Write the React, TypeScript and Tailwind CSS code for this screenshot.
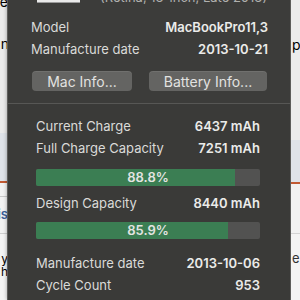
const font = { fontFamily: 'Inter, "Noto Sans", sans-serif' };

type Row = { label: string; value: string };

const upperRows: Row[] = [
  { label: 'Model', value: 'MacBookPro11,3' },
  { label: 'Manufacture date', value: '2013-10-21' },
];

const InfoRow = ({ label, value }: Row) => (
  <div className="flex h-[22px] items-center justify-between text-[13px]">
    <span className="text-[#dadad8]">{label}</span>
    <span className="font-semibold text-[#ebebe9]">{value}</span>
  </div>
);

const Bar = ({ percent }: { percent: number }) => (
  <div className="relative h-[17px] w-full overflow-hidden rounded-[2px] bg-[#525251]">
    <div className="h-full bg-[#3b7e53]" style={{ width: `${percent}%` }} />
    <div className="absolute inset-0 flex items-center justify-center text-[13px] font-semibold text-[#e4e4e2]">
      {percent.toFixed(1)}%
    </div>
  </div>
);

const LeftStrip = () => (
  <div className="flex w-[7px] shrink-0 flex-col overflow-hidden bg-[#ebebeb] text-[14px] text-black">
    <div className="flex h-[9px] items-end justify-end whitespace-nowrap leading-none">
      <span className="-mr-[1px]">e</span>
    </div>
    <div className="mt-[28px] flex h-[12px] justify-end whitespace-nowrap leading-none">
      <span className="-mr-[2px]">n</span>
    </div>
    <div className="h-[84px]" />
    <div className="h-[48px] bg-[#dfe3e9]" />
    <div className="h-[2px] bg-[#c25a33]" />
    <div className="h-[13px] bg-[#f2f2f2]" />
    <div className="h-px bg-[#c9c9c9]" />
    <div className="flex h-[36px] items-center justify-end bg-[#f2f2f2] text-[13px] font-semibold text-[#3b5f9a]">
      <span className="-mr-[1px]">is</span>
    </div>
    <div className="h-px bg-[#cfcfcf]" />
    <div className="flex flex-col items-end gap-[2px] bg-[#f4f4f4] pt-[19px] text-[12px] leading-[11px]">
      <span className="-mr-[1px]">y</span>
      <span className="-mr-[1px]">h</span>
    </div>
    <div className="flex-1 bg-[#f4f4f4]" />
  </div>
);

const RightStrip = () => (
  <div className="flex flex-1 flex-col overflow-hidden bg-[#ececec] text-[14px] text-black">
    <div className="h-[38px]" />
    <div className="h-[12px] pl-[1px] leading-none">p</div>
    <div className="h-[90px]" />
    <div className="h-[42px] bg-[#dfe3e9]" />
    <div className="h-[2px] bg-[#c25a33]" />
    <div className="h-[49px] bg-[#f2f2f2]" />
    <div className="h-px bg-[#d4d4d4]" />
    <div className="bg-[#f4f4f4] pt-[18px] pl-[1px] text-[13px] leading-none text-[#333]">e</div>
    <div className="flex-1 bg-[#f4f4f4]" />
  </div>
);

export default function App() {
  return (
    <div className="flex h-[300px] w-[300px] overflow-hidden bg-[#ebebeb]" style={font}>
      <LeftStrip />
      <div className="-mt-[20px] flex w-[284px] shrink-0 flex-col border-x border-[#5d5d5b] shadow-[0_0_4px_rgba(0,0,0,0.35)]">
        <div className="bg-[#3c3c3a] pl-[23px] pr-[22px] pb-[12px]">
          <div className="flex h-[37px] items-start">
            <div className="ml-[6px] h-[23px] w-[43px] border-b border-[#9a9a9a] bg-[#e9e9e9]" />
            <span className="ml-[20px] mt-[9px] whitespace-nowrap text-[13px] leading-[16px] text-[#b0b0ae]">
              (Retina, 13-inch, Late 2013)
            </span>
          </div>
          {upperRows.map((row) => (
            <InfoRow key={row.label} {...row} />
          ))}
          <div className="mt-[10px] flex gap-[17px] pl-[1px] text-[14px] text-[#e2e2e0]">
            <button className="flex h-[20px] w-[100px] items-center justify-center rounded-[4px] bg-[#646462] shadow-[0_1px_0_rgba(255,255,255,0.08)_inset]">
              Mac Info...
            </button>
            <button className="flex h-[20px] w-[118px] items-center justify-center rounded-[4px] bg-[#646462] shadow-[0_1px_0_rgba(255,255,255,0.08)_inset]">
              Battery Info...
            </button>
          </div>
        </div>
        <div className="h-px bg-[#575755]" />
        <div className="flex-1 bg-[#3a3a38] pl-[28px] pr-[30px] pt-[12px]">
          <InfoRow label="Current Charge" value="6437 mAh" />
          <InfoRow label="Full Charge Capacity" value="7251 mAh" />
          <div className="mt-[9px]">
            <Bar percent={88.8} />
          </div>
          <div className="mt-[7px]">
            <InfoRow label="Design Capacity" value="8440 mAh" />
          </div>
          <div className="mt-[7px]">
            <Bar percent={85.9} />
          </div>
          <div className="mt-[14px]">
            <InfoRow label="Manufacture date" value="2013-10-06" />
            <InfoRow label="Cycle Count" value="953" />
          </div>
        </div>
      </div>
      <RightStrip />
    </div>
  );
}
